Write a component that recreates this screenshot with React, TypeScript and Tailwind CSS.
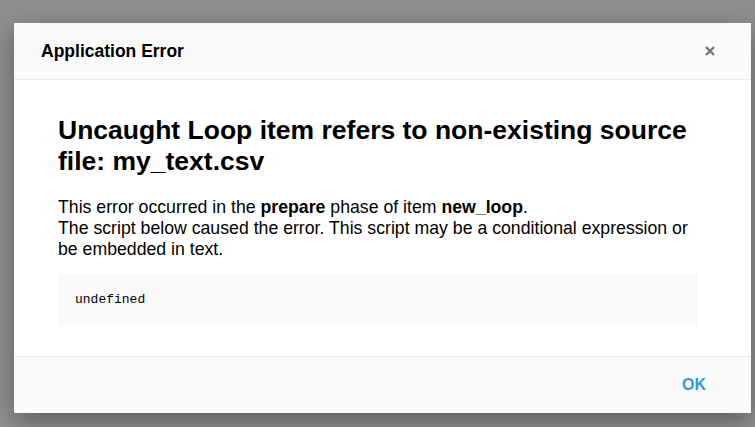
export default function App() {
  return (
    <div className="h-[427px] w-[755px] overflow-hidden bg-[#8f8f8f] pl-[14px] pt-[23px] font-['Liberation_Sans',Arial,sans-serif]">
      <div className="flex h-[390px] w-[737px] flex-col bg-white shadow-[0_8px_24px_rgba(0,0,0,0.35)]">
        <div className="flex h-[57px] shrink-0 items-center justify-between border-b border-[#e8e8e8] bg-[#fafafa] pl-[27px] pr-[36px]">
          <div className="text-[17.5px] font-bold text-black">Application Error</div>
          <svg width="10" height="10" viewBox="0 0 10 10" aria-hidden>
            <path d="M1 1L9 9M9 1L1 9" stroke="#777" strokeWidth="2.4" />
          </svg>
        </div>
        <div className="flex-1 px-[44px] pt-[35px]">
          <h1 className="text-[26.5px] font-bold leading-[31px] text-black">
            Uncaught Loop item refers to non-existing source file: my_text.csv
          </h1>
          <p className="mt-[20px] pr-[6px] text-[17.7px] leading-[21px] text-black">
            This error occurred in the <b>prepare</b> phase of item <b>new_loop</b>.
            <br />
            The script below caused the error. This script may be a conditional expression or be embedded in text.
          </p>
          <div className="mt-[14px] flex h-[51px] w-[640px] items-center bg-[#f9f9f9] px-[17px] font-['Liberation_Mono',monospace] text-[13px] text-black">
            undefined
          </div>
        </div>
        <div className="flex h-[57px] shrink-0 items-center justify-end border-t border-[#e8e8e8] bg-[#fafafa] pr-[45px]">
          <span className="text-[16px] font-bold text-[#3498db]">OK</span>
        </div>
      </div>
    </div>
  );
}
